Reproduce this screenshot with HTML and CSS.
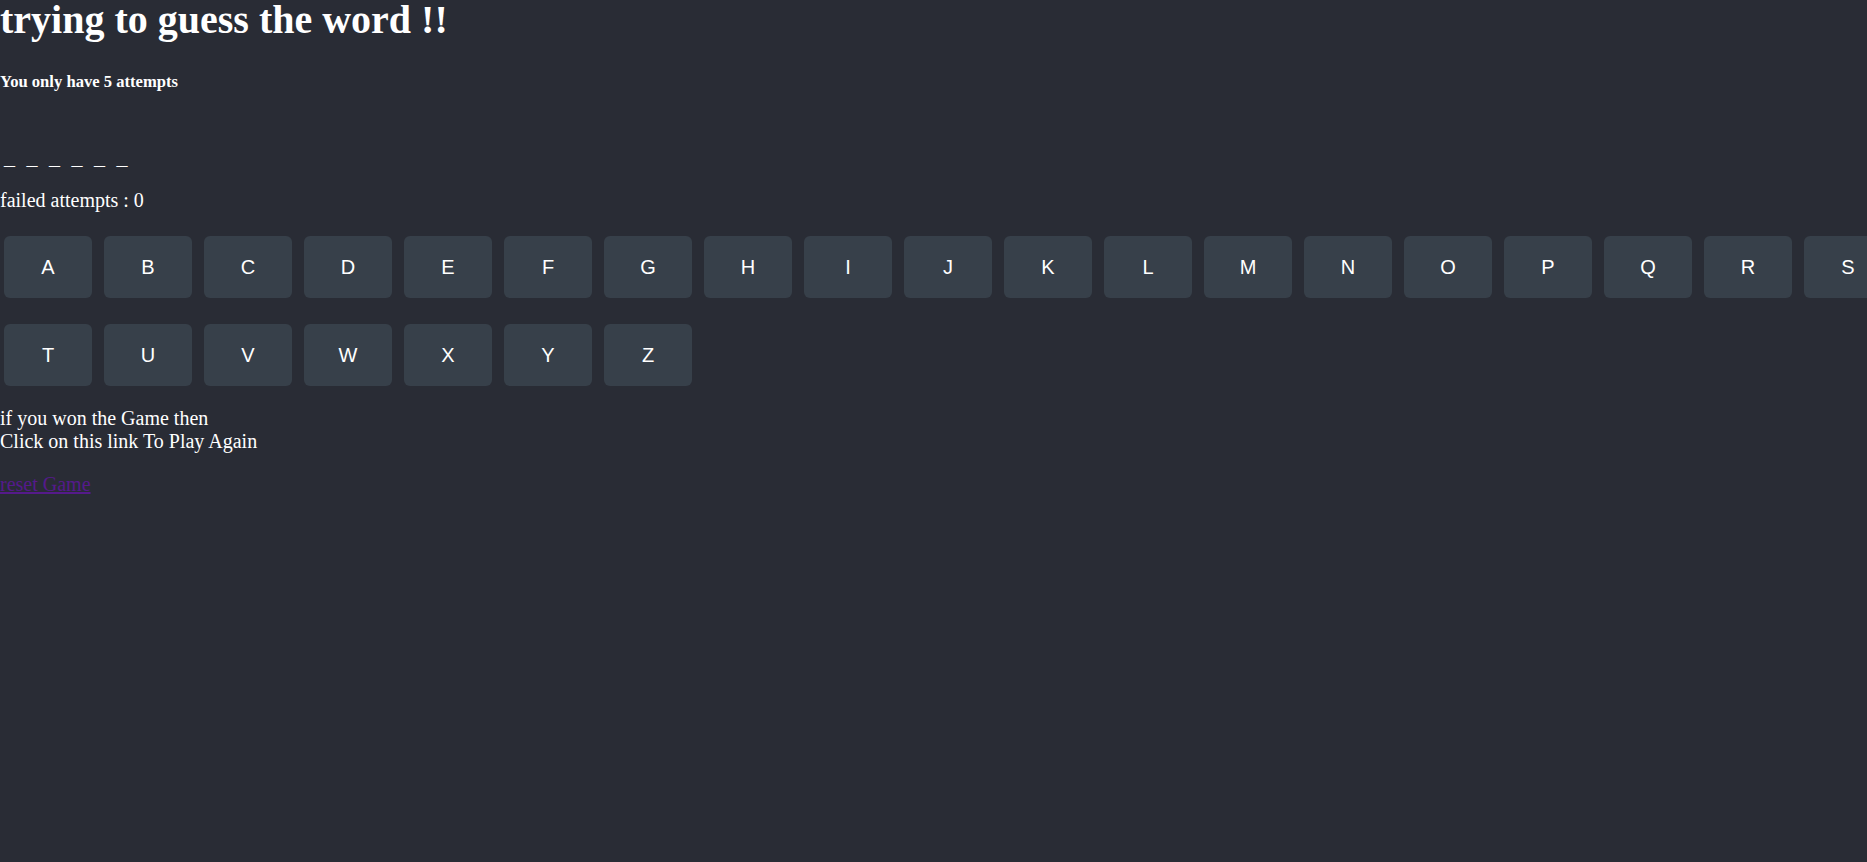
FILE: index.html
```html
<!DOCTYPE html>
<html>
<head>
<meta charset="utf-8">
<title>Hangman</title>
<link rel="stylesheet" href="styles.css">
</head>
<body>
<div class="app">
  <h1 class="title">trying to guess the word !!</h1>
  <h5 class="subtitle">You only have 5 attempts</h5>
  <div class="word">
    <span class="slot">_</span><span class="slot">_</span><span class="slot">_</span><span class="slot">_</span><span class="slot">_</span><span class="slot">_</span>
  </div>
  <p class="failed">failed attempts : 0</p>
  <div class="keys">
    <div class="key-row">
      <button class="key">A</button><button class="key">B</button><button class="key">C</button><button class="key">D</button><button class="key">E</button><button class="key">F</button><button class="key">G</button><button class="key">H</button><button class="key">I</button><button class="key">J</button><button class="key">K</button><button class="key">L</button><button class="key">M</button><button class="key">N</button><button class="key">O</button><button class="key">P</button><button class="key">Q</button><button class="key">R</button><button class="key">S</button>
    </div>
    <div class="key-row">
      <button class="key">T</button><button class="key">U</button><button class="key">V</button><button class="key">W</button><button class="key">X</button><button class="key">Y</button><button class="key">Z</button>
    </div>
  </div>
  <p class="note">if you won the Game then<br>Click on this link To Play Again</p>
  <a class="reset" href="#">reset Game</a>
</div>
</body>
</html>
```

FILE: styles.css
```css
html {
  overflow: hidden;
  background: #292c35;
}
body {
  margin: 0;
  background: #292c35;
  color: #ffffff;
  font-family: "Liberation Serif", "Times New Roman", serif;
  font-size: 20px;
  overflow: hidden;
  height: 862px;
}
.app {
  display: flex;
  flex-direction: column;
  align-items: flex-start;
}
.title {
  margin: 0;
  font-size: 40px;
  line-height: 40px;
  font-weight: bold;
}
.subtitle {
  margin: 32px 0 0 0;
  font-size: 16.6px;
  line-height: 19px;
  font-weight: bold;
}
.word {
  display: flex;
  gap: 11.5px;
  padding-left: 4px;
  margin-top: 53px;
  font-size: 22px;
  line-height: 25px;
}
.slot {
  width: 11px;
}
.failed {
  margin: 20px 0 0 0;
  line-height: 23px;
}
.keys {
  display: flex;
  flex-direction: column;
  gap: 26px;
  margin-top: 24px;
  padding-left: 4px;
}
.key-row {
  display: flex;
  gap: 12px;
  flex-wrap: nowrap;
}
.key {
  flex: none;
  width: 88px;
  height: 62px;
  border: none;
  border-radius: 6px;
  background: #37404a;
  color: #ffffff;
  font-family: "Liberation Sans", Arial, sans-serif;
  font-size: 20px;
  padding: 0;
}
.note {
  margin: 21px 0 0 0;
  line-height: 23px;
}
.reset {
  margin-top: 20px;
  color: #551a8b;
  line-height: 23px;
}
```
